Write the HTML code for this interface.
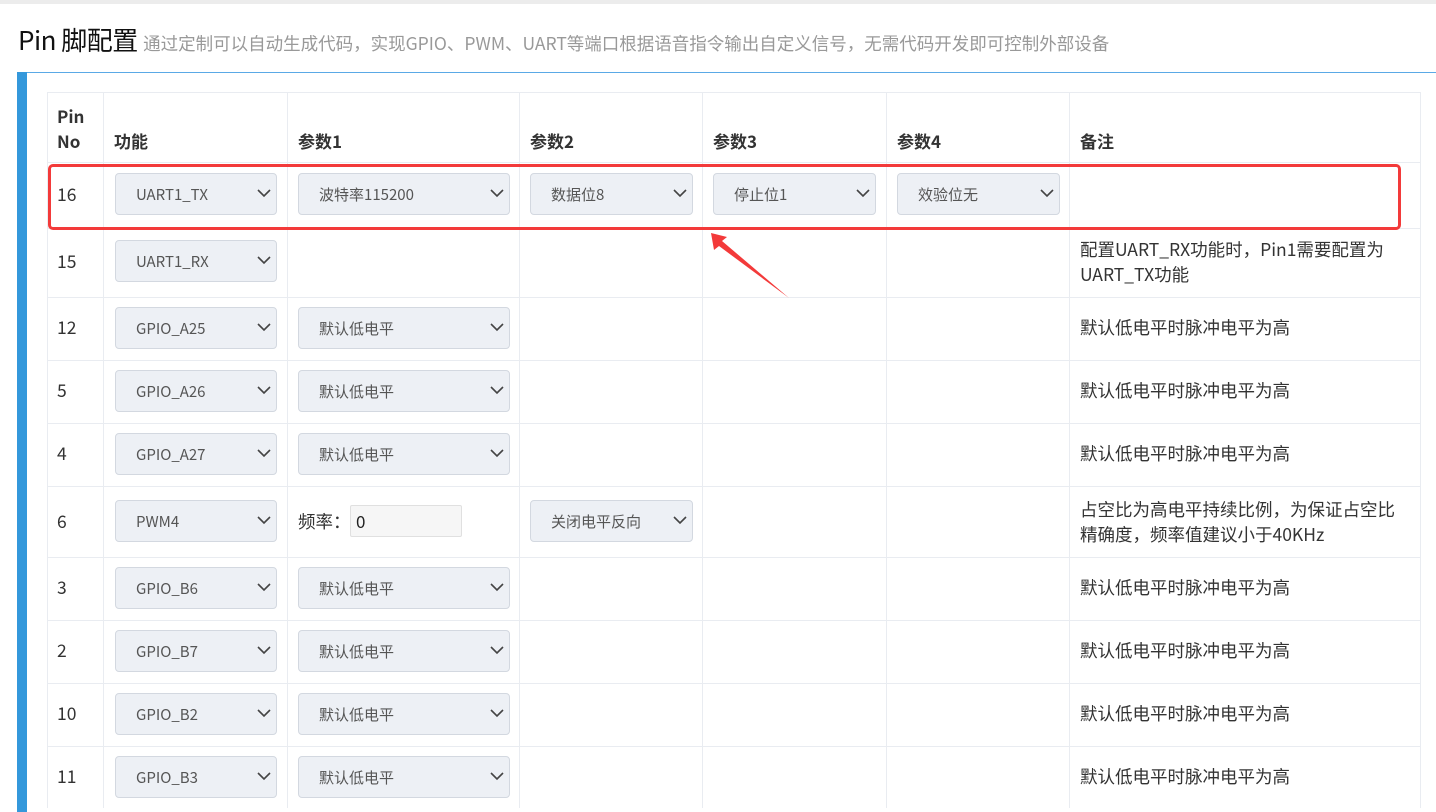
<!DOCTYPE html>
<html><head><meta charset="utf-8"><style>
*{margin:0;padding:0;box-sizing:border-box}
body{width:1436px;height:808px;overflow:hidden;background:#fff;font-family:"Noto Sans CJK SC","Liberation Sans",sans-serif;color:#333;position:relative}
.topline{position:absolute;left:0;top:0;width:1436px;height:4px;background:#ececec}
.title{position:absolute;left:18px;top:21px;font-size:26px;color:#111;white-space:nowrap;letter-spacing:-0.5px}
.title span{font-size:17.5px;color:#999;margin-left:0px;letter-spacing:0}
.bar{position:absolute;left:17px;top:72px;width:10px;height:740px;background:#3498db}
.bline{position:absolute;left:17px;top:72px;width:1419px;height:1px;background:#5aa9e6}
.h{position:absolute;height:1px;background:#e9ecf1;left:47px;width:1374px}
.v{position:absolute;width:1px;background:#e9ecf1;top:92px;height:716px}
.t{position:absolute;font-size:17.5px;color:#333;white-space:nowrap;line-height:25px}
.b{font-weight:bold;font-size:17px}
.sel{position:absolute;height:42px;background:#edf0f5;border:1px solid #d3d8e0;border-radius:4px;font-size:15px;color:#555;padding-left:20px;line-height:42px}
.sel svg{position:absolute;right:5px;top:15px}
.inp{position:absolute;left:350px;top:505px;width:112px;height:32px;background:#f6f6f6;border:1px solid #e0e0e0;border-radius:2px;font-size:17px;padding-left:5px;line-height:30px;color:#222}
.red{position:absolute;left:48px;top:164px;width:1353px;height:66px;border:3px solid #f33a3a;border-radius:5px}
</style></head><body>
<div class="topline"></div>
<div class="title">Pin 脚配置 <span>通过定制可以自动生成代码，实现GPIO、PWM、UART等端口根据语音指令输出自定义信号，无需代码开发即可控制外部设备</span></div>
<div class="bline"></div>
<div class="bar"></div>

<div class="h" style="top:92px"></div>
<div class="h" style="top:162px"></div>
<div class="h" style="top:228px"></div>
<div class="h" style="top:297px"></div>
<div class="h" style="top:360px"></div>
<div class="h" style="top:423px"></div>
<div class="h" style="top:486px"></div>
<div class="h" style="top:557px"></div>
<div class="h" style="top:620px"></div>
<div class="h" style="top:683px"></div>
<div class="h" style="top:746px"></div>
<div class="v" style="left:47px"></div>
<div class="v" style="left:103px"></div>
<div class="v" style="left:287px"></div>
<div class="v" style="left:519px"></div>
<div class="v" style="left:702px"></div>
<div class="v" style="left:886px"></div>
<div class="v" style="left:1069px"></div>
<div class="v" style="left:1420px"></div>

<div class="t b" style="left:57px;top:103px">Pin</div>
<div class="t b" style="left:57px;top:128px">No</div>
<div class="t b" style="left:114px;top:128px">功能</div>
<div class="t b" style="left:298px;top:128px">参数1</div>
<div class="t b" style="left:530px;top:128px">参数2</div>
<div class="t b" style="left:713px;top:128px">参数3</div>
<div class="t b" style="left:897px;top:128px">参数4</div>
<div class="t b" style="left:1080px;top:128px">备注</div>

<div class="t" style="left:57px;top:182px">16</div>
<div class="t" style="left:57px;top:249px">15</div>
<div class="t" style="left:57px;top:315px">12</div>
<div class="t" style="left:57px;top:378px">5</div>
<div class="t" style="left:57px;top:441px">4</div>
<div class="t" style="left:57px;top:509px">6</div>
<div class="t" style="left:57px;top:575px">3</div>
<div class="t" style="left:57px;top:638px">2</div>
<div class="t" style="left:57px;top:701px">10</div>
<div class="t" style="left:57px;top:764px">11</div>

<div class="sel" style="left:115px;top:173px;width:162px">UART1_TX<svg width="14" height="9"><path d="M1 1l6 6 6-6" fill="none" stroke="#444" stroke-width="1.6"/></svg></div>
<div class="sel" style="left:298px;top:173px;width:212px">波特率115200<svg width="14" height="9"><path d="M1 1l6 6 6-6" fill="none" stroke="#444" stroke-width="1.6"/></svg></div>
<div class="sel" style="left:530px;top:173px;width:163px">数据位8<svg width="14" height="9"><path d="M1 1l6 6 6-6" fill="none" stroke="#444" stroke-width="1.6"/></svg></div>
<div class="sel" style="left:713px;top:173px;width:163px">停止位1<svg width="14" height="9"><path d="M1 1l6 6 6-6" fill="none" stroke="#444" stroke-width="1.6"/></svg></div>
<div class="sel" style="left:897px;top:173px;width:163px">效验位无<svg width="14" height="9"><path d="M1 1l6 6 6-6" fill="none" stroke="#444" stroke-width="1.6"/></svg></div>

<div class="sel" style="left:115px;top:240px;width:162px">UART1_RX<svg width="14" height="9"><path d="M1 1l6 6 6-6" fill="none" stroke="#444" stroke-width="1.6"/></svg></div>
<div class="t" style="left:1080px;top:237px">配置UART_RX功能时，Pin1需要配置为</div>
<div class="t" style="left:1080px;top:262px">UART_TX功能</div>

<div class="sel" style="left:115px;top:307px;width:162px">GPIO_A25<svg width="14" height="9"><path d="M1 1l6 6 6-6" fill="none" stroke="#444" stroke-width="1.6"/></svg></div>
<div class="sel" style="left:298px;top:307px;width:212px">默认低电平<svg width="14" height="9"><path d="M1 1l6 6 6-6" fill="none" stroke="#444" stroke-width="1.6"/></svg></div>
<div class="t" style="left:1080px;top:315px">默认低电平时脉冲电平为高</div>

<div class="sel" style="left:115px;top:370px;width:162px">GPIO_A26<svg width="14" height="9"><path d="M1 1l6 6 6-6" fill="none" stroke="#444" stroke-width="1.6"/></svg></div>
<div class="sel" style="left:298px;top:370px;width:212px">默认低电平<svg width="14" height="9"><path d="M1 1l6 6 6-6" fill="none" stroke="#444" stroke-width="1.6"/></svg></div>
<div class="t" style="left:1080px;top:378px">默认低电平时脉冲电平为高</div>

<div class="sel" style="left:115px;top:433px;width:162px">GPIO_A27<svg width="14" height="9"><path d="M1 1l6 6 6-6" fill="none" stroke="#444" stroke-width="1.6"/></svg></div>
<div class="sel" style="left:298px;top:433px;width:212px">默认低电平<svg width="14" height="9"><path d="M1 1l6 6 6-6" fill="none" stroke="#444" stroke-width="1.6"/></svg></div>
<div class="t" style="left:1080px;top:441px">默认低电平时脉冲电平为高</div>

<div class="sel" style="left:115px;top:500px;width:162px">PWM4<svg width="14" height="9"><path d="M1 1l6 6 6-6" fill="none" stroke="#444" stroke-width="1.6"/></svg></div>
<div class="t" style="left:298px;top:509px">频率：</div>
<div class="inp">0</div>
<div class="sel" style="left:530px;top:500px;width:163px">关闭电平反向<svg width="14" height="9"><path d="M1 1l6 6 6-6" fill="none" stroke="#444" stroke-width="1.6"/></svg></div>
<div class="t" style="left:1080px;top:497px">占空比为高电平持续比例，为保证占空比</div>
<div class="t" style="left:1080px;top:522px">精确度，频率值建议小于40KHz</div>

<div class="sel" style="left:115px;top:567px;width:162px">GPIO_B6<svg width="14" height="9"><path d="M1 1l6 6 6-6" fill="none" stroke="#444" stroke-width="1.6"/></svg></div>
<div class="sel" style="left:298px;top:567px;width:212px">默认低电平<svg width="14" height="9"><path d="M1 1l6 6 6-6" fill="none" stroke="#444" stroke-width="1.6"/></svg></div>
<div class="t" style="left:1080px;top:575px">默认低电平时脉冲电平为高</div>

<div class="sel" style="left:115px;top:630px;width:162px">GPIO_B7<svg width="14" height="9"><path d="M1 1l6 6 6-6" fill="none" stroke="#444" stroke-width="1.6"/></svg></div>
<div class="sel" style="left:298px;top:630px;width:212px">默认低电平<svg width="14" height="9"><path d="M1 1l6 6 6-6" fill="none" stroke="#444" stroke-width="1.6"/></svg></div>
<div class="t" style="left:1080px;top:638px">默认低电平时脉冲电平为高</div>

<div class="sel" style="left:115px;top:693px;width:162px">GPIO_B2<svg width="14" height="9"><path d="M1 1l6 6 6-6" fill="none" stroke="#444" stroke-width="1.6"/></svg></div>
<div class="sel" style="left:298px;top:693px;width:212px">默认低电平<svg width="14" height="9"><path d="M1 1l6 6 6-6" fill="none" stroke="#444" stroke-width="1.6"/></svg></div>
<div class="t" style="left:1080px;top:701px">默认低电平时脉冲电平为高</div>

<div class="sel" style="left:115px;top:756px;width:162px">GPIO_B3<svg width="14" height="9"><path d="M1 1l6 6 6-6" fill="none" stroke="#444" stroke-width="1.6"/></svg></div>
<div class="sel" style="left:298px;top:756px;width:212px">默认低电平<svg width="14" height="9"><path d="M1 1l6 6 6-6" fill="none" stroke="#444" stroke-width="1.6"/></svg></div>
<div class="t" style="left:1080px;top:764px">默认低电平时脉冲电平为高</div>

<div class="red"></div>
<svg style="position:absolute;left:0;top:0" width="1436" height="808"><path d="M711 233 L727 237 L722 241 L789 298 L719 246 L714 250 Z" fill="#f33a3a"/></svg>
</body></html>
